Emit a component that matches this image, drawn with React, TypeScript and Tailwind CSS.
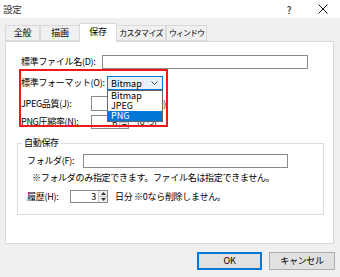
import React from 'react';

const font = { fontFamily: '"Noto Sans CJK JP", "Noto Sans", sans-serif' };

function Spin({ value, width }: { value: string; width: string }) {
  return (
    <div className={`flex h-full shrink-0 ${width} border border-[#8a8a8a] bg-white`}>
      <div className="flex-1 flex items-center justify-end pr-[2px] leading-none">{value}</div>
      <div className="w-[9px] flex flex-col border-l border-[#c8c8c8] bg-[#efefef]">
        <div className="flex-1 flex items-center justify-center border-b border-[#c8c8c8]">
          <svg width="5" height="3" viewBox="0 0 5 3"><path d="M0 3 L2.5 0 L5 3 Z" fill="#333" /></svg>
        </div>
        <div className="flex-1 flex items-center justify-center">
          <svg width="5" height="3" viewBox="0 0 5 3"><path d="M0 0 L2.5 3 L5 0 Z" fill="#333" /></svg>
        </div>
      </div>
    </div>
  );
}

export default function App() {
  const tabs = ['全般', '描画', '保存', 'カスタマイズ', 'ウィンドウ'];
  const tabWidths = ['w-[35px]', 'w-[39px]', 'w-[38px]', 'w-[49px]', 'w-[41px]'];
  const tabText = ['', '', '', 'text-[8px] tracking-[-0.7px]', 'text-[8px] tracking-[-1px]'];

  return (
    <div className="relative w-[340px] h-[277px] bg-[#f0f0f0] overflow-hidden text-[9px] tracking-[-0.3px] whitespace-nowrap text-black" style={font}>
      {/* Title bar */}
      <div className="h-[18px] bg-white flex items-center justify-between">
        <span className="pl-[3px] text-[9.5px] text-[#333]">設定</span>
        <div className="flex items-center h-full">
          <span className="w-[46px] text-center text-[10px]">?</span>
          <span className="w-[22px] flex justify-center mr-[6px]">
            <svg width="10" height="10" viewBox="0 0 10 10">
              <path d="M0.5 0.5 L9.5 9.5 M9.5 0.5 L0.5 9.5" stroke="#111" strokeWidth="1" />
            </svg>
          </span>
        </div>
      </div>

      {/* Tabs */}
      <div className="mt-[5px] ml-[5px] flex items-end h-[18px]">
        {tabs.map((t, i) =>
          i === 2 ? (
            <div
              key={t}
              className={`${tabWidths[i]} h-[19px] -mb-[1px] relative z-10 bg-white border border-b-0 border-[#d9d9d9] flex justify-center pt-[2px] leading-[11px]`}
            >
              {t}
            </div>
          ) : (
            <div
              key={t}
              className={`${tabWidths[i]} h-[16px] bg-[#f0f0f0] border border-[#d9d9d9] ${i === 3 ? 'border-l-0' : ''} ${i === 1 ? 'border-r-0' : ''} flex items-center justify-center`}
            >
              <span className={tabText[i]}>{t}</span>
            </div>
          )
        )}
      </div>

      {/* Panel */}
      <div className="ml-[5px] w-[329px] h-[203px] bg-white border border-[#d9d9d9] pt-[13px] flex flex-col">
        <div className="flex items-center h-[14px] pl-[15px]">
          <span className="w-[81px] shrink-0">標準ファイル名(D):</span>
          <div className="w-[206px] h-full border border-[#8a8a8a] bg-white" />
        </div>
        <div className="flex items-center h-[14px] mt-[7px] pl-[15px]">
          <span className="w-[86px] shrink-0">標準フォーマット(O):</span>
          <div className="w-[56px] shrink-0 h-full border border-[#0078d7] bg-[#e5f1fb] flex items-center justify-between pl-[3px] pr-[4px]">
            <span className="leading-none tracking-normal">Bitmap</span>
            <svg width="7" height="4" viewBox="0 0 7 4">
              <path d="M0.5 0.5 L3.5 3.5 L6.5 0.5" stroke="#333" strokeWidth="0.9" fill="none" />
            </svg>
          </div>
        </div>
        <div className="flex items-center h-[15px] mt-[6px] pl-[15px]">
          <span className="w-[70px] shrink-0">JPEG品質(J):</span>
          <Spin value="" width="w-[38px]" />
          <span className="ml-[8px]">(0~100)</span>
        </div>
        <div className="flex items-center h-[14px] mt-[4px] pl-[15px]">
          <span className="w-[70px] shrink-0">PNG圧縮率(N):</span>
          <Spin value="6" width="w-[38px]" />
          <span className="ml-[8px]">(0~9)</span>
        </div>

        {/* Group box */}
        <div className="relative ml-[11px] mt-[14px] w-[307px] h-[72px] border border-[#dcdcdc] pt-[10px] pl-[9px]">
          <span className="absolute left-[4px] -top-[7px] bg-white px-[2px] leading-[12px]">自動保存</span>
          <div className="flex items-center h-[14px]">
            <span className="w-[56px] shrink-0">フォルダ(F):</span>
            <div className="w-[205px] h-full border border-[#8a8a8a] bg-white" />
          </div>
          <div className="h-[14px] mt-[3px] pl-[5px] flex items-center">
            ※フォルダのみ指定できます。ファイル名は指定できません。
          </div>
          <div className="flex items-center h-[13px] mt-[5px]">
            <span className="w-[43px] shrink-0">履歴(H):</span>
            <Spin value="3" width="w-[38px]" />
            <span className="ml-[7px]">日分 ※0なら削除しません。</span>
          </div>
        </div>
      </div>

      {/* Buttons */}
      <div className="flex justify-end gap-[7px] mt-[8px] pr-[5px]">
        <button className="w-[65px] h-[18px] bg-[#e1e1e1] border-2 border-[#0078d7] flex items-center justify-center">OK</button>
        <button className="w-[66px] h-[18px] bg-[#e1e1e1] border border-[#adadad] flex items-center justify-center">キャンセル</button>
      </div>

      {/* Dropdown list */}
      <div className="absolute left-[107px] top-[90px] w-[56px] bg-white border border-[#646464] flex flex-col tracking-normal">
        <div className="h-[10px] leading-[10px] pl-[3px]">Bitmap</div>
        <div className="h-[10px] leading-[10px] pl-[3px]">JPEG</div>
        <div className="h-[10px] leading-[10px] pl-[3px] bg-[#0078d7] text-white">PNG</div>
      </div>

      {/* Red annotation */}
      <div className="absolute left-[19px] top-[69px] w-[149px] h-[58px] border-2 border-[#f01818]" />
    </div>
  );
}
